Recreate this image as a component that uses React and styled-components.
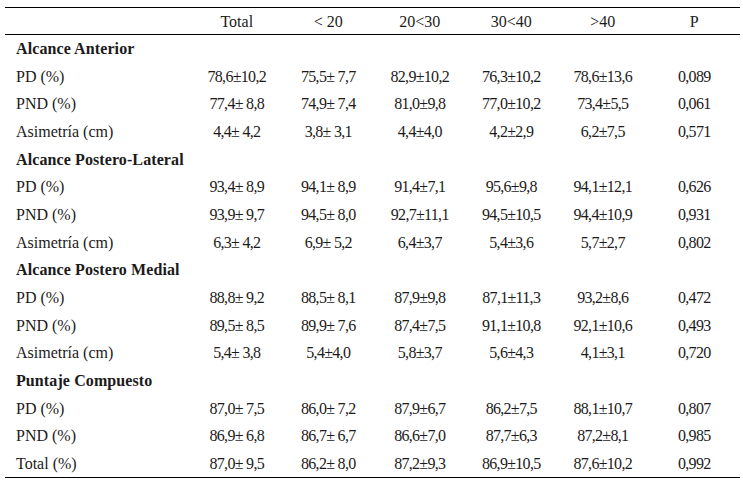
import React from "react";
import styled, { createGlobalStyle } from "styled-components";

const Global = createGlobalStyle`
  html, body { margin: 0; padding: 0; background: #fff; }
  body { font-family: "Liberation Serif", "Times New Roman", serif; color: #1c1a1a; }
`;

const Page = styled.div`
  padding: 7px 3px 0 5px;
`;

const Table = styled.table`
  width: 735px;
  border-collapse: collapse;
  table-layout: fixed;
  border-top: 1px solid #000;
  border-bottom: 1px solid #000;
  font-family: "Liberation Serif", "Times New Roman", serif;
  color: #1c1a1a;
`;

const HeadRow = styled.tr`
  height: 27px;
  border-bottom: 1px solid #000;
`;

const Row = styled.tr`
  height: 27.7px;
`;

const Th = styled.th`
  font-weight: normal;
  font-size: 16px;
  text-align: center;
  padding: 2px 0 0;
  width: ${(p) => (p.$label ? "186px" : "auto")};
`;

const Label = styled.td`
  font-size: 16px;
  padding: 1px 0 0 11px;
  white-space: nowrap;
  font-weight: ${(p) => (p.$section ? "bold" : "normal")};
  letter-spacing: ${(p) => (p.$section ? "0.1px" : "0")};
`;

const Num = styled.td`
  font-size: 16px;
  letter-spacing: -0.7px;
  text-align: center;
  padding: 1px 0 0;
  white-space: pre;
`;

const cols = ["Total", "< 20", "20<30", "30<40", ">40", "P"];

const data = [
  { section: "Alcance Anterior" },
  { label: "PD (%)", v: ["78,6±10,2", "75,5± 7,7", "82,9±10,2", "76,3±10,2", "78,6±13,6", "0,089"] },
  { label: "PND (%)", v: ["77,4± 8,8", "74,9± 7,4", "81,0±9,8", "77,0±10,2", "73,4±5,5", "0,061"] },
  { label: "Asimetría (cm)", v: ["4,4± 4,2", "3,8± 3,1", "4,4±4,0", "4,2±2,9", "6,2±7,5", "0,571"] },
  { section: "Alcance Postero-Lateral" },
  { label: "PD (%)", v: ["93,4± 8,9", "94,1± 8,9", "91,4±7,1", "95,6±9,8", "94,1±12,1", "0,626"] },
  { label: "PND (%)", v: ["93,9± 9,7", "94,5± 8,0", "92,7±11,1", "94,5±10,5", "94,4±10,9", "0,931"] },
  { label: "Asimetría (cm)", v: ["6,3± 4,2", "6,9± 5,2", "6,4±3,7", "5,4±3,6", "5,7±2,7", "0,802"] },
  { section: "Alcance Postero Medial" },
  { label: "PD (%)", v: ["88,8± 9,2", "88,5± 8,1", "87,9±9,8", "87,1±11,3", "93,2±8,6", "0,472"] },
  { label: "PND (%)", v: ["89,5± 8,5", "89,9± 7,6", "87,4±7,5", "91,1±10,8", "92,1±10,6", "0,493"] },
  { label: "Asimetría (cm)", v: ["5,4± 3,8", "5,4±4,0", "5,8±3,7", "5,6±4,3", "4,1±3,1", "0,720"] },
  { section: "Puntaje Compuesto" },
  { label: "PD (%)", v: ["87,0± 7,5", "86,0± 7,2", "87,9±6,7", "86,2±7,5", "88,1±10,7", "0,807"] },
  { label: "PND (%)", v: ["86,9± 6,8", "86,7± 6,7", "86,6±7,0", "87,7±6,3", "87,2±8,1", "0,985"] },
  { label: "Total (%)", v: ["87,0± 9,5", "86,2± 8,0", "87,2±9,3", "86,9±10,5", "87,6±10,2", "0,992"] },
];

export default function App() {
  return (
    <>
      <Global />
      <Page>
        <Table>
          <thead>
            <HeadRow>
              <Th $label />
              {cols.map((c) => (
                <Th key={c}>{c}</Th>
              ))}
            </HeadRow>
          </thead>
          <tbody>
            {data.map((r, i) =>
              r.section ? (
                <Row key={i}>
                  <Label $section colSpan={7}>{r.section}</Label>
                </Row>
              ) : (
                <Row key={i}>
                  <Label>{r.label}</Label>
                  {r.v.map((x, j) => (
                    <Num key={j}>{x}</Num>
                  ))}
                </Row>
              )
            )}
          </tbody>
        </Table>
      </Page>
    </>
  );
}
